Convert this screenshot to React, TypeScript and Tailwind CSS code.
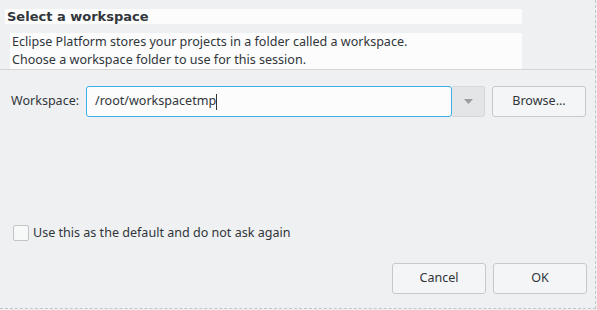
import React from "react";

export default function App() {
  return (
    <div className="w-[597px] h-[310px] bg-[#eff0f1]" style={{ fontFamily: '"Noto Sans", sans-serif' }}>
      <div className="w-[596px] h-[309px] border-r border-b border-dashed border-[#c4c5c6] flex flex-col text-[#31363b]">
        {/* Header */}
        <div className="h-[70px] border-b border-[#d4d5d6] pt-[9px] w-[595px]">
          <div
            className="ml-[5px] w-[517px] h-[15px] bg-[#fcfcfc] pl-[2px] text-[13px] leading-[15px] font-bold text-[#31363b]"
            style={{ fontFamily: '"DejaVu Sans", sans-serif' }}
          >
            Select a workspace
          </div>
          <div className="ml-[10px] mt-[9px] w-[512px] h-[36px] bg-[#fcfcfc] pl-[2px] text-[12.55px] leading-[18px]">
            <div>Eclipse Platform stores your projects in a folder called a workspace.</div>
            <div>Choose a workspace folder to use for this session.</div>
          </div>
        </div>

        {/* Workspace row */}
        <div className="flex items-center mt-[16px] pl-[11px] h-[31px] text-[12.55px]">
          <span className="w-[75px]">Workspace:</span>
          <div className="w-[366px] h-[31px] bg-[#fcfcfc] border border-[#3daee9] rounded-[3px] flex items-center pl-[8px]">
            <span>/root/workspacetmp</span>
            <span className="w-px h-[16px] bg-[#31363b]"></span>
          </div>
          <div className="w-[33px] h-[31px] bg-[#e3e5e7] border border-[#d6d7d8] border-l-0 rounded-r-[3px] flex items-center justify-center">
            <svg width="9" height="5" viewBox="0 0 9 5">
              <path d="M0 0 L9 0 L4.5 5 Z" fill="#9a9c9e" />
            </svg>
          </div>
          <button className="ml-[7px] w-[94px] h-[31px] rounded-[3px] border border-[#c6c8ca] bg-[#f4f5f6] text-[#31363b]">
            Browse...
          </button>
        </div>

        {/* Checkbox */}
        <div className="flex items-center mt-[108px] pl-[13px] h-[16px] text-[12.55px]">
          <div className="w-[16px] h-[16px] rounded-[2px] border border-[#c2c4c6] bg-[#f7f8f8]"></div>
          <span className="ml-[4px]">Use this as the default and do not ask again</span>
        </div>

        {/* Buttons */}
        <div className="flex justify-start mt-[22px] pl-[392px] gap-[7px] text-[12.55px]">
          <button className="w-[94px] h-[31px] rounded-[3px] border border-[#c6c8ca] bg-[#f4f5f6] text-[#31363b]">
            Cancel
          </button>
          <button className="w-[94px] h-[31px] rounded-[3px] border border-[#c6c8ca] bg-[#f4f5f6] text-[#31363b]">
            OK
          </button>
        </div>
      </div>
    </div>
  );
}
